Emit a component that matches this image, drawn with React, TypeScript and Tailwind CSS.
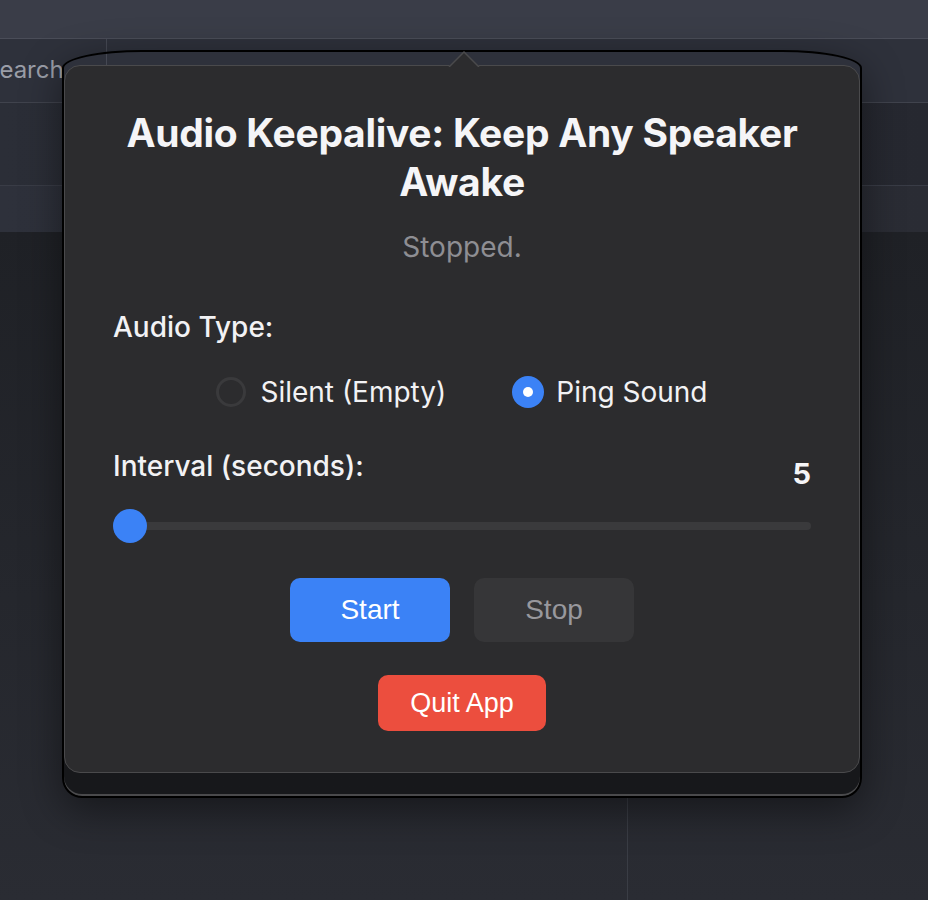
import React from 'react';

const App: React.FC = () => {
  return (
    <div className="relative h-[900px] w-[928px] overflow-hidden bg-[#24262c] font-['Inter',sans-serif]">
      {/* background app behind the popover */}
      <div className="flex flex-col">
        <div className="h-[38px] bg-[#3a3d48]" />
        <div className="h-px bg-[#4a4d58]" />
        <div className="flex h-[63px] bg-[#2e313b]">
          <div className="flex w-[107px] items-center overflow-hidden border-r border-[#454853]">
            <span className="-ml-[16px] pb-[2px] text-[24px] text-[#9a9da7]">Search</span>
          </div>
          <div className="flex-1" />
        </div>
        <div className="h-px bg-[#40434d]" />
        <div className="h-[82px] bg-linear-to-r from-[#2b2e37] to-[#262830]" />
        <div className="h-px bg-[#393c46]" />
        <div className="h-[46px] bg-linear-to-r from-[#2e313b] to-[#2a2c34]" />
        <div className="flex h-[669px] bg-linear-to-b from-[#1f2126] to-[#2a2c33]">
          <div className="w-[627px]" />
          <div className="mt-[540px] w-px bg-[#3a3d45]" />
        </div>
      </div>

      {/* popover window */}
      <div className="absolute left-[62px] top-[50px] h-[748px] w-[800px] rounded-[80px_80px_20px_20px/18px_18px_20px_20px] border-2 border-black bg-linear-to-b from-transparent from-[85%] to-[#17181b] to-[85%] shadow-[0_12px_40px_rgba(0,0,0,0.45),inset_0_-2px_0_#4a4a4c]">
        <div className="relative mt-[13px] flex h-[708px] flex-col items-center rounded-[16px] border border-[#4a4a4c] bg-[#2c2c2e] px-[48px] pt-[42px]">
          <svg
            className="absolute -top-[15px] left-[383px]"
            width="32"
            height="16"
            viewBox="0 0 32 16"
          >
            <path d="M0 16 L16 1 L32 16 Z" fill="#2c2c2e" />
            <path d="M1 16 L16 1 L31 16" fill="none" stroke="#4a4a4c" strokeWidth="1.5" />
          </svg>

          <h1 className="whitespace-nowrap text-center text-[39px] font-bold leading-[49px] tracking-[-0.3px] text-[#f5f5f7]">
            Audio Keepalive: Keep Any Speaker
            <br />
            Awake
          </h1>
          <p className="mt-[24px] text-[28px] leading-[34px] text-[#8e8e93]">Stopped.</p>

          <div className="mt-[46px] w-full text-[28px] font-medium leading-[34px] text-[#f2f2f4]">
            Audio Type:
          </div>

          <div className="mt-[31px] flex items-center gap-[66px] text-[28px] leading-[34px] text-[#f2f2f4]">
            <label className="flex items-center gap-[14px]">
              <span className="h-[30px] w-[30px] rounded-full border-[3px] border-[#3a3a3c]" />
              Silent (Empty)
            </label>
            <label className="flex items-center gap-[12px]">
              <span className="flex h-[32px] w-[32px] items-center justify-center rounded-full bg-[#3b82f6]">
                <span className="h-[10px] w-[10px] rounded-full bg-white" />
              </span>
              Ping Sound
            </label>
          </div>

          <div className="mt-[40px] flex w-full items-start justify-between">
            <span className="text-[28px] font-medium leading-[34px] text-[#f2f2f4]">Interval (seconds):</span>
            <span className="mt-[7px] text-[29px] font-bold leading-[36px] text-[#f5f5f7]">5</span>
          </div>

          <div className="relative mt-[17px] flex h-[34px] w-full items-center">
            <div className="h-[8px] w-full rounded-full bg-[#3a3a3c]" />
            <div className="absolute left-0 h-[34px] w-[34px] rounded-full bg-[#3b82f6]" />
          </div>

          <div className="mt-[35px] flex gap-[24px] font-['Liberation_Sans',Arial,sans-serif] text-[28px]">
            <button className="h-[64px] w-[160px] rounded-[10px] bg-[#3b82f6] text-white">Start</button>
            <button className="h-[64px] w-[160px] rounded-[10px] bg-[#363638] text-[#98989d]">Stop</button>
          </div>

          <button className="mt-[33px] h-[56px] w-[168px] rounded-[10px] bg-[#ec4e3e] font-['Liberation_Sans',Arial,sans-serif] text-[27px] text-white">
            Quit App
          </button>
        </div>
      </div>
    </div>
  );
};

export default App;
